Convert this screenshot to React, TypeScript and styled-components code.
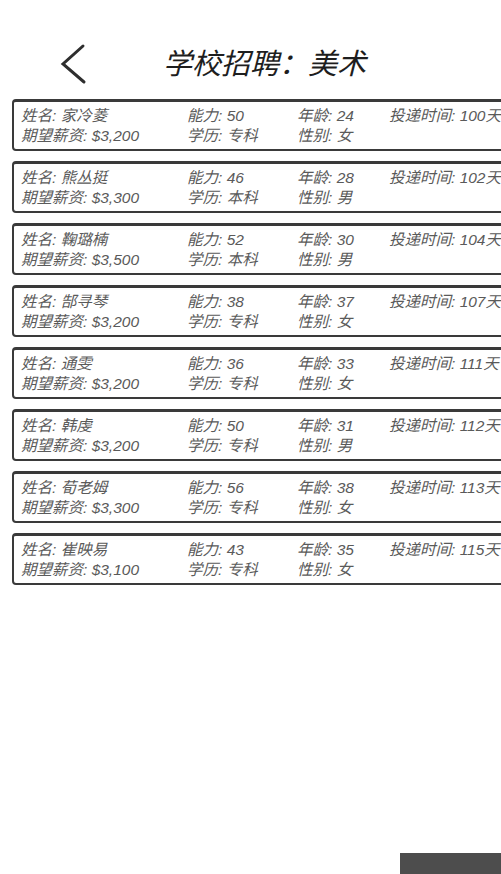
import React from "react";
import styled, { createGlobalStyle } from "styled-components";

const Global = createGlobalStyle`
  html, body { margin: 0; padding: 0; background: #ffffff; overflow: hidden; }
  body { width: 501px; height: 874px; font-family: "Liberation Sans", "Noto Sans CJK SC", sans-serif; }
`;

const Page = styled.div`
  width: 501px;
  height: 874px;
  overflow: hidden;
  position: relative;
  display: flex;
  flex-direction: column;
`;

const Header = styled.header`
  height: 99px;
  display: flex;
  align-items: center;
  padding-left: 58px;
  padding-top: 28px;
  box-sizing: border-box;
`;

const BackButton = styled.button`
  width: 30px;
  height: 42px;
  border: none;
  background: none;
  padding: 0;
  display: flex;
  align-items: center;
  justify-content: center;
  cursor: pointer;
`;

const Title = styled.h1`
  margin: 0 0 6px 75px;
  font-family: "Noto Sans CJK SC", sans-serif;
  font-weight: 400;
  font-style: italic;
  font-size: 29px;
  line-height: 36px;
  color: #1e1e1e;
  letter-spacing: 0;
`;

const List = styled.div`
  display: flex;
  flex-direction: column;
  gap: 10px;
  padding-left: 12px;
`;

const Card = styled.div`
  width: 530px;
  flex: none;
  box-sizing: border-box;
  height: 52px;
  border: 2px solid #3a3a3a;
  border-top-width: 3px;
  border-radius: 4px;
  padding: 2px 0 0 7px;
  display: grid;
  grid-template-columns: 166px 110px 92px 1fr;
  grid-auto-rows: 20px;
  align-items: center;
`;

const Cell = styled.span`
  font-family: "Liberation Sans", "Noto Sans CJK SC", sans-serif;
  font-style: italic;
  font-size: 15.5px;
  color: #5a5a5a;
  white-space: nowrap;
`;

const FloatingBar = styled.div`
  position: absolute;
  right: 0;
  bottom: 0;
  width: 101px;
  height: 21px;
  background: #4d4d4d;
`;

type Applicant = {
  name: string;
  ability: number;
  age: number;
  days: number;
  salary: string;
  edu: string;
  gender: string;
};

const applicants: Applicant[] = [
  { name: "家冷菱", ability: 50, age: 24, days: 100, salary: "$3,200", edu: "专科", gender: "女" },
  { name: "熊丛挺", ability: 46, age: 28, days: 102, salary: "$3,300", edu: "本科", gender: "男" },
  { name: "鞠璐楠", ability: 52, age: 30, days: 104, salary: "$3,500", edu: "本科", gender: "男" },
  { name: "郜寻琴", ability: 38, age: 37, days: 107, salary: "$3,200", edu: "专科", gender: "女" },
  { name: "通雯", ability: 36, age: 33, days: 111, salary: "$3,200", edu: "专科", gender: "女" },
  { name: "韩虔", ability: 50, age: 31, days: 112, salary: "$3,200", edu: "专科", gender: "男" },
  { name: "荀老姆", ability: 56, age: 38, days: 113, salary: "$3,300", edu: "专科", gender: "女" },
  { name: "崔映易", ability: 43, age: 35, days: 115, salary: "$3,100", edu: "专科", gender: "女" },
];

export default function App() {
  return (
    <>
      <Global />
      <Page>
        <Header>
          <BackButton aria-label="back">
            <svg width="30" height="42" viewBox="0 0 30 42">
              <path d="M25 3 L5 21 L26 39" fill="none" stroke="#2e2e2e" strokeWidth="3" strokeLinecap="round" strokeLinejoin="miter" />
            </svg>
          </BackButton>
          <Title>学校招聘：美术</Title>
        </Header>
        <List>
          {applicants.map((a) => (
            <Card key={a.name}>
              <Cell>姓名: {a.name}</Cell>
              <Cell>能力: {a.ability}</Cell>
              <Cell>年龄: {a.age}</Cell>
              <Cell>投递时间: {a.days}天</Cell>
              <Cell>期望薪资: {a.salary}</Cell>
              <Cell>学历: {a.edu}</Cell>
              <Cell>性别: {a.gender}</Cell>
            </Card>
          ))}
        </List>
        <FloatingBar />
      </Page>
    </>
  );
}
